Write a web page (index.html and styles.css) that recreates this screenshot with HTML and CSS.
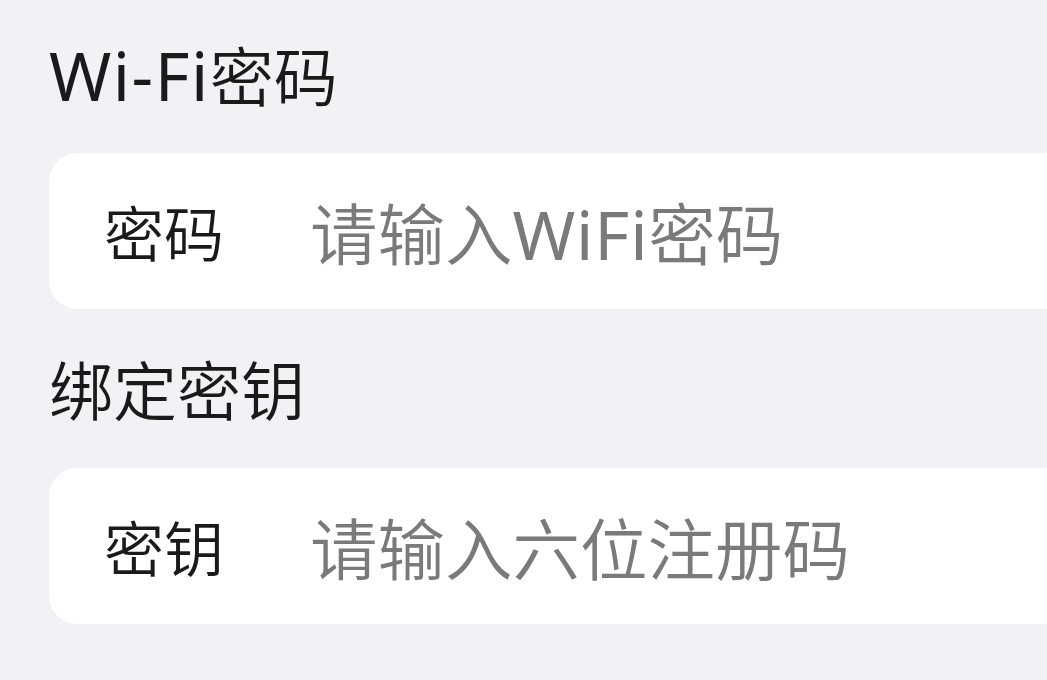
FILE: index.html
```html
<!DOCTYPE html>
<html lang="zh-CN">
<head>
<meta charset="utf-8">
<link rel="stylesheet" href="styles.css">
</head>
<body>
<div class="page">
  <div class="section-title first"><span class="latin">Wi-Fi</span>密码</div>
  <div class="card">
    <span class="label">密码</span>
    <span class="placeholder">请输入<span class="latin-ph">WiFi</span>密码</span>
  </div>
  <div class="section-title second">绑定密钥</div>
  <div class="card">
    <span class="label">密钥</span>
    <span class="placeholder">请输入六位注册码</span>
  </div>
</div>
</body>
</html>
```
FILE: styles.css
```css
html, body {
  margin: 0;
  padding: 0;
  background: #f1f1f6;
  overflow: hidden;
}
body {
  width: 1047px;
  height: 680px;
  font-family: "Noto Sans", "Noto Sans CJK SC", sans-serif;
  font-weight: 350;
}
.page {
  padding: 37px 0 0 49px;
  display: flex;
  flex-direction: column;
}
.section-title {
  font-size: 64px;
  line-height: 80px;
  height: 80px;
  color: #1a1a1a;
  margin-bottom: 36px;
}
.section-title.second {
  margin-top: 42px;
  margin-bottom: 37px;
}
.latin {
  font-size: 67px;
  line-height: 1;
  letter-spacing: 1.5px;
  font-weight: 400;
}
.card {
  background: #ffffff;
  border-radius: 28px;
  height: 156px;
  margin-right: -60px;
  display: flex;
  align-items: center;
  padding-left: 55px;
}
.label {
  font-size: 60px;
  color: #1a1a1a;
  width: 206px;
  flex: none;
}
.placeholder {
  font-size: 67.5px;
  color: #7a7a7a;
}
.latin-ph {
  letter-spacing: 0.8px;
  font-weight: 400;
}
```
